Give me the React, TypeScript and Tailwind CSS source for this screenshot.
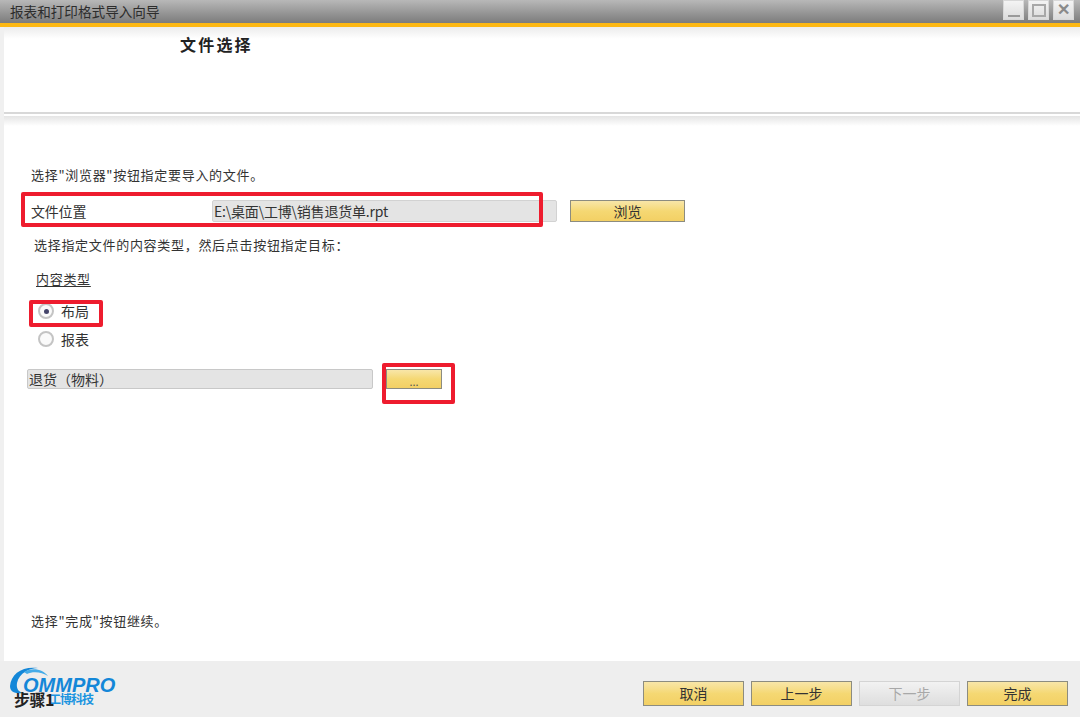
import type { ReactNode } from "react"

const yellowBtn =
  "flex items-center justify-center border border-[#8c8c80] bg-gradient-to-b from-[#f8e6a8] via-[#f5d873] to-[#f3d064] text-[14px] tracking-normal text-[#333]"

function WinButton({ children }: { children: ReactNode }) {
  return (
    <div className="flex h-[20px] w-[21px] items-center justify-center border border-[#d8d8d8] bg-gradient-to-b from-[#f4f4f4] to-[#dcdcdc]">
      {children}
    </div>
  )
}

function FootButton({ label, disabled }: { label: string; disabled?: boolean }) {
  if (disabled) {
    return (
      <div className="flex h-[25px] w-[101px] items-center justify-center border border-[#d4d4d4] bg-gradient-to-b from-[#f2f2f2] to-[#dedede] text-[14px] text-[#a8a8a8]">
        {label}
      </div>
    )
  }
  return <div className={`${yellowBtn} h-[25px] w-[101px]`}>{label}</div>
}

function Radio({ checked, label }: { checked?: boolean; label: string }) {
  return (
    <div className="flex h-[20px] items-center pl-[38px]">
      <div className="flex h-[16px] w-[16px] items-center justify-center rounded-full border-2 border-[#c4c4c4] bg-[#fafafa]">
        {checked && <div className="h-[5px] w-[5px] rounded-full bg-[#44446a]" />}
      </div>
      <span className="ml-[7px] text-[14px] tracking-normal text-[#333]">{label}</span>
    </div>
  )
}

function Logo() {
  return (
    <div className="relative h-[44px] w-[112px]">
      <svg viewBox="0 0 50 40" className="absolute left-0 top-0 h-[40px] w-[50px]">
        <path d="M2 22C3 10 14 2 30 4C22 4 11 9 9 19C8 25 11 28 15 29C7 30 2 28 2 22Z" fill="#1487d8" />
        <path d="M16 8C24 3 35 5 40 12C34 8 25 7 19 10Z" fill="#46ace8" />
      </svg>
      <span className="absolute left-[15px] top-[9px] text-[20px] font-bold italic leading-[24px] tracking-[0px] text-[#1487d8] [font-family:'Liberation_Sans',sans-serif]">
        OMMPRO
      </span>
      <span className="absolute left-[41px] top-[28px] text-[12px] font-bold leading-[14px] tracking-[-1px] text-[#1a94e0]">
        工博科技
      </span>
      <span className="absolute left-[6px] top-[25px] text-[16px] font-bold leading-[20px] tracking-[-0.5px] text-[#222]">
        步骤1
      </span>
    </div>
  )
}

export default function App() {
  return (
    <div className="flex h-[717px] w-[1080px] flex-col overflow-hidden bg-white text-[13px] tracking-[0.7px] text-[#333] [font-family:'Noto_Sans_CJK_SC','Liberation_Sans',sans-serif]">
      {/* title bar */}
      <div className="flex h-[23px] shrink-0 items-start justify-between bg-gradient-to-b from-[#b8b8b8] to-[#7c7c7c] pl-[10px] pr-[6px]">
        <span className="text-[13.6px] leading-[22px] tracking-normal text-[#2c2c2c]">报表和打印格式导入向导</span>
        <div className="flex gap-[4px]">
          <WinButton>
            <div className="mt-[11px] h-[2px] w-[12px] bg-[#9a9a9a]" />
          </WinButton>
          <WinButton>
            <div className="h-[13px] w-[14px] border-2 border-[#a8a8a8]" />
          </WinButton>
          <WinButton>
            <span className="text-[16px] font-bold leading-none text-[#8a8a8a] [font-family:'Liberation_Sans',sans-serif]">✕</span>
          </WinButton>
        </div>
      </div>
      <div className="h-[4px] shrink-0 bg-[#fdb813]" />

      <div className="flex min-h-0 flex-1 border-l-[4px] border-[#f0f0f0]">
        <div className="flex min-w-0 flex-1 flex-col">
          {/* header */}
          <div className="h-[87px] shrink-0 border-b-2 border-[#d8d8d8] bg-gradient-to-b from-[#ececec] to-white to-[14%] pl-[176px] pt-[5px]">
            <h1 className="text-[16px] font-bold leading-[24px] tracking-[2.2px] text-[#222]">文件选择</h1>
          </div>
          <div className="h-[2px] shrink-0 bg-white" />
          <div className="h-[10px] shrink-0 bg-gradient-to-b from-[#e4e4e4] to-white" />

          {/* body */}
          <div className="relative flex min-h-0 flex-1 flex-col">
            <p className="ml-[27px] mt-[39px] h-[20px] leading-[20px]">选择"浏览器"按钮指定要导入的文件。</p>
            <div className="mt-[15px] flex h-[22px] items-center">
              <span className="ml-[27px] w-[181px] text-[14px] tracking-[-0.2px]">文件位置</span>
              <div className="flex h-[22px] w-[345px] items-center rounded-[2px] border border-[#d2d2d2] bg-[#e4e4e4] pl-[1px] text-[14px] tracking-[-0.2px]">
                E:\桌面\工博\销售退货单.rpt
              </div>
              <div className={`${yellowBtn} ml-[13px] h-[22px] w-[115px]`}>浏览</div>
            </div>
            <p className="ml-[30px] mt-[13px] h-[20px] leading-[20px]">选择指定文件的内容类型，然后点击按钮指定目标：</p>
            <p className="ml-[32px] mt-[14px] h-[20px] leading-[20px] underline underline-offset-2">内容类型</p>
            <div className="-ml-[4px] mt-[12px] flex flex-col gap-[8px]">
              <Radio checked label="布局" />
              <Radio label="报表" />
            </div>
            <div className="mt-[20px] flex h-[20px] items-center">
              <div className="ml-[23px] flex h-[20px] w-[346px] items-center rounded-[2px] border border-[#c8c8c8] bg-[#e4e4e4] pl-[1px] text-[14px] tracking-normal">
                退货（物料）
              </div>
              <div className={`${yellowBtn} ml-[13px] h-[20px] w-[56px] pt-[4px] !text-[11px] leading-none !text-[#555]`}>...</div>
            </div>
            <div className="flex-1" />
            <p className="mb-[30px] ml-[27px] h-[20px] leading-[20px]">选择"完成"按钮继续。</p>

            {/* red annotation boxes */}
            <div className="absolute left-[17px] top-[66px] h-[35px] w-[522px] rounded-[2px] border-[4px] border-[#ee1c2e]" />
            <div className="absolute left-[25px] top-[174px] h-[27px] w-[74px] rounded-[2px] border-[4px] border-[#ee1c2e]" />
            <div className="absolute left-[378px] top-[237px] h-[41px] w-[73px] rounded-[2px] border-[4px] border-[#ee1c2e]" />
          </div>
        </div>
      </div>

      {/* footer */}
      <div className="flex h-[56px] shrink-0 items-start justify-between bg-[#eeeeee] pl-[8px] pr-[12px] tracking-normal">
        <div className="pt-[3px]">
          <Logo />
        </div>
        <div className="flex gap-[7px] pt-[20px]">
          <FootButton label="取消" />
          <FootButton label="上一步" />
          <FootButton label="下一步" disabled />
          <FootButton label="完成" />
        </div>
      </div>
    </div>
  )
}
